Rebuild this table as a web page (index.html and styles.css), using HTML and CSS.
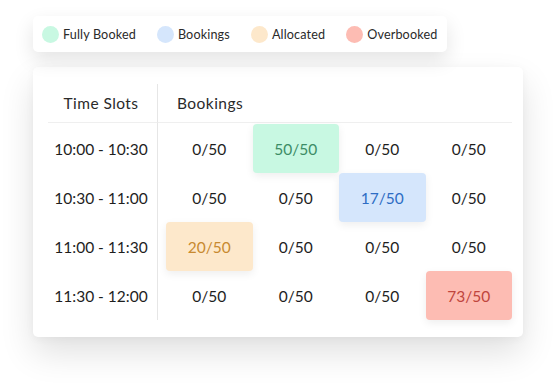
FILE: index.html
```html
<!DOCTYPE html>
<html>
<head>
<meta charset="utf-8">
<link rel="stylesheet" href="styles.css">
</head>
<body>
<div class="page">
  <div class="legend">
    <div class="legend-item"><span class="dot dot-green"></span><span>Fully Booked</span></div>
    <div class="legend-item"><span class="dot dot-blue"></span><span>Bookings</span></div>
    <div class="legend-item"><span class="dot dot-orange"></span><span>Allocated</span></div>
    <div class="legend-item"><span class="dot dot-red"></span><span>Overbooked</span></div>
  </div>
  <div class="card">
    <div class="table">
      <div class="hd hd-time">Time Slots</div>
      <div class="hd hd-book">Bookings</div>
      <div class="times">
        <div class="time">10:00 - 10:30</div>
        <div class="time">10:30 - 11:00</div>
        <div class="time">11:00 - 11:30</div>
        <div class="time">11:30 - 12:00</div>
      </div>
      <div class="cells">
        <div class="cell">0/50</div>
        <div class="cell cell-green">50/50</div>
        <div class="cell">0/50</div>
        <div class="cell">0/50</div>

        <div class="cell">0/50</div>
        <div class="cell">0/50</div>
        <div class="cell cell-blue">17/50</div>
        <div class="cell">0/50</div>

        <div class="cell cell-orange">20/50</div>
        <div class="cell">0/50</div>
        <div class="cell">0/50</div>
        <div class="cell">0/50</div>

        <div class="cell">0/50</div>
        <div class="cell">0/50</div>
        <div class="cell">0/50</div>
        <div class="cell cell-red">73/50</div>
      </div>
    </div>
  </div>
</div>
</body>
</html>
```

FILE: styles.css
```css
html, body {
  margin: 0;
  padding: 0;
  background: #ffffff;
}

body {
  font-family: "Lato", "Noto Sans", sans-serif;
  color: #1e1e1e;
  width: 556px;
  height: 386px;
  overflow: hidden;
}

.page {
  padding: 16px 0 0 33px;
}

.legend {
  display: inline-flex;
  align-items: center;
  height: 36px;
  padding: 0 10px 0 9px;
  gap: 21px;
  background: #ffffff;
  border-radius: 5px;
  box-shadow: 0 8px 20px rgba(0, 0, 0, 0.11);
  box-sizing: border-box;
  font-size: 12.6px;
  letter-spacing: 0.15px;
  color: #2a2a2a;
}

.legend-item {
  display: flex;
  align-items: center;
  gap: 4px;
}

.dot {
  width: 17px;
  height: 17px;
  border-radius: 50%;
  display: inline-block;
}

.dot-green { background: #c8f8e2; }
.dot-blue { background: #d5e6fc; }
.dot-orange { background: #fde8cb; }
.dot-red { background: #fdbcb3; }

.card {
  margin-top: 15px;
  width: 490px;
  height: 270px;
  box-sizing: border-box;
  padding: 17px 11px 0 15px;
  background: #ffffff;
  border-radius: 5px;
  box-shadow: 0 16px 34px rgba(0, 0, 0, 0.12), 0 2px 8px rgba(0, 0, 0, 0.04);
}

.table {
  display: grid;
  grid-template-columns: 110px 1fr;
  grid-template-rows: 39px auto;
  font-size: 15.5px;
}

.hd {
  display: flex;
  align-items: center;
  border-bottom: 1px solid #efefef;
  color: #2a2a2a;
  letter-spacing: 0.45px;
}

.hd-time {
  justify-content: center;
  border-right: 1px solid #e6e6e6;
  padding-right: 3px;
}

.hd-book {
  padding-left: 19px;
}

.times {
  display: grid;
  grid-template-rows: repeat(4, 49px);
  border-right: 1px solid #e6e6e6;
  padding-top: 1px;
}

.time {
  display: flex;
  align-items: center;
  justify-content: center;
  padding-right: 3px;
}

.cells {
  display: grid;
  grid-template-columns: repeat(4, 1fr);
  grid-template-rows: repeat(4, 49px);
  padding: 1px 0 0 8px;
}

.cell {
  display: flex;
  align-items: center;
  justify-content: center;
  border-radius: 4px;
}

.cell-green {
  background: #c8f8e2;
  color: #3d8c66;
  box-shadow: 0 3px 8px rgba(0, 0, 0, 0.07);
}

.cell-blue {
  background: #d5e6fc;
  color: #2e6dc4;
  box-shadow: 0 3px 8px rgba(0, 0, 0, 0.07);
}

.cell-orange {
  background: #fde8cb;
  color: #c88a30;
  box-shadow: 0 3px 8px rgba(0, 0, 0, 0.07);
}

.cell-red {
  background: #fdbcb3;
  color: #c0453d;
  box-shadow: 0 3px 8px rgba(0, 0, 0, 0.07);
}
```
